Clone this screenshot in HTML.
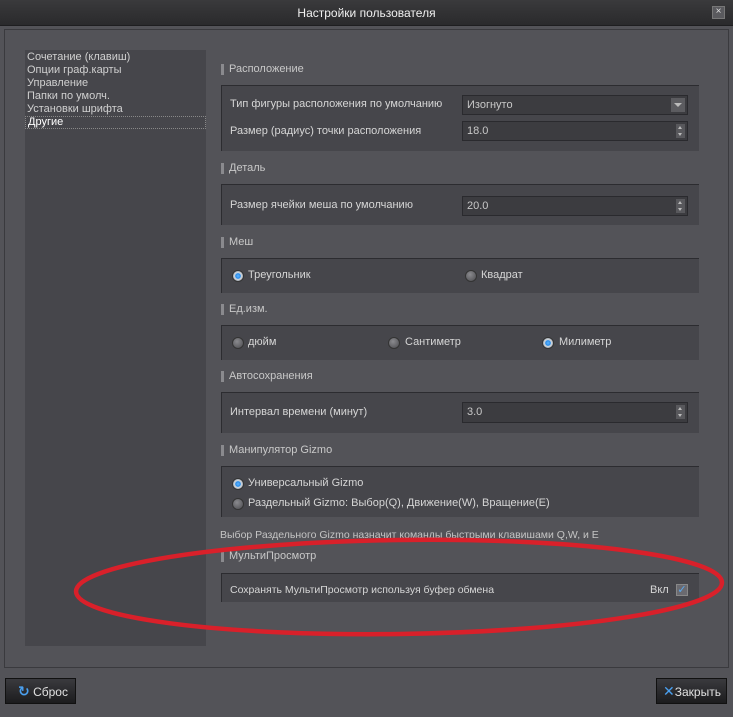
<!DOCTYPE html>
<html><head><meta charset="utf-8"><style>
body{margin:0;width:733px;height:717px;background:#535358;font-family:"Liberation Sans","DejaVu Sans",sans-serif;font-size:11px;color:#d8d8d8;position:relative;overflow:hidden}
.abs{position:absolute}
.title{left:0;top:0;width:733px;height:25px;background:linear-gradient(#3a3a3c,#2a2a2c);border-bottom:1px solid #1e1e20;text-align:center;line-height:27px;color:#f0f0f0;font-size:12px}
.frame{left:4px;top:29px;width:723px;height:637px;border:1px solid #3a3a3e}
.list{left:25px;top:50px;width:181px;height:596px;background:#46464b;padding-top:1px;box-sizing:border-box}
.list div{height:13px;line-height:13px;padding-left:2px;color:#d0d0d0}
.lbl{left:221px;color:#c8c8c8;height:14px;line-height:14px;padding-left:8px}
.lbl:before{content:"";position:absolute;left:0;top:2px;width:3px;height:11px;background:#8a8a8e}
.box{left:221px;width:477px;background:#46464b;border-top:1px solid #2c2c30;border-left:1px solid #2c2c30}
.inp{left:462px;width:226px;height:20px;background:#3c3c40;border:1px solid #2a2a2e;box-sizing:border-box;line-height:18px;padding-left:4px;color:#c8c8c8}
.spin{position:absolute;right:2px;top:2px;width:9px;height:14px;background:#58585c}
.spin:before{content:"";position:absolute;left:2px;top:2px;border:2.5px solid transparent;border-bottom:3px solid #bbb;border-top:0}
.spin:after{content:"";position:absolute;left:2px;bottom:2px;border:2.5px solid transparent;border-top:3px solid #bbb;border-bottom:0}
.t{color:#d6d6d6}
.rad{width:10px;height:10px;border-radius:50%;background:radial-gradient(circle at 40% 35%,#8a8a8e,#4a4a4e);border:1px solid #333}
.rad.on{background:radial-gradient(circle,#5fb6ff 0,#2a8ae8 35%,#cfd8e0 45%,#8a8a90 100%)}
.btn{top:678px;height:26px;border:1px solid #111;background:linear-gradient(#3a3a3e,#1c1c1e);box-sizing:border-box;color:#e0e0e0;font-size:12px;line-height:24px}
</style></head><body>
<div class="abs title">Настройки пользователя</div>
<div class="abs" style="left:712px;top:6px;width:11px;height:11px;background:#5a5a5e;border:1px solid #777;color:#ddd;font-size:10px;line-height:10px;text-align:center">×</div>
<div class="abs frame"></div>
<div class="abs list">
<div>Сочетание (клавиш)</div><div>Опции граф.карты</div><div>Управление</div><div>Папки по умолч.</div><div>Установки шрифта</div><div style="color:#fff;border:1px dotted #888;height:11px;line-height:11px">Другие</div>
</div>

<div class="abs lbl" style="top:62px">Расположение</div>
<div class="abs box" style="top:85px;height:65px"></div>
<div class="abs t" style="left:230px;top:98px">Тип фигуры расположения по умолчанию</div>
<div class="abs inp" style="top:95px">Изогнуто<div class="abs" style="right:2px;top:2px;width:14px;height:14px;background:#5c5c60"><div class="abs" style="left:3px;top:5px;border:4px solid transparent;border-top:4px solid #bbb;border-bottom:0"></div></div></div>
<div class="abs t" style="left:230px;top:125px">Размер (радиус) точки расположения</div>
<div class="abs inp" style="top:121px">18.0<div class="spin"></div></div>

<div class="abs lbl" style="top:161px">Деталь</div>
<div class="abs box" style="top:184px;height:40px"></div>
<div class="abs t" style="left:230px;top:199px">Размер ячейки меша по умолчанию</div>
<div class="abs inp" style="top:196px">20.0<div class="spin"></div></div>

<div class="abs lbl" style="top:235px">Меш</div>
<div class="abs box" style="top:258px;height:34px"></div>
<div class="abs rad on" style="left:232px;top:270px"></div><div class="abs t" style="left:248px;top:269px">Треугольник</div>
<div class="abs rad" style="left:465px;top:270px"></div><div class="abs t" style="left:481px;top:269px">Квадрат</div>

<div class="abs lbl" style="top:302px">Ед.изм.</div>
<div class="abs box" style="top:325px;height:34px"></div>
<div class="abs rad" style="left:232px;top:337px"></div><div class="abs t" style="left:248px;top:336px">дюйм</div>
<div class="abs rad" style="left:388px;top:337px"></div><div class="abs t" style="left:405px;top:336px">Сантиметр</div>
<div class="abs rad on" style="left:542px;top:337px"></div><div class="abs t" style="left:559px;top:336px">Милиметр</div>

<div class="abs lbl" style="top:369px">Автосохранения</div>
<div class="abs box" style="top:392px;height:40px"></div>
<div class="abs t" style="left:230px;top:406px">Интервал времени (минут)</div>
<div class="abs inp" style="top:402px;height:21px">3.0<div class="spin"></div></div>

<div class="abs lbl" style="top:443px">Манипулятор Gizmo</div>
<div class="abs box" style="top:466px;height:50px"></div>
<div class="abs rad on" style="left:232px;top:478px"></div><div class="abs t" style="left:248px;top:477px">Универсальный Gizmo</div>
<div class="abs rad" style="left:232px;top:498px"></div><div class="abs t" style="left:248px;top:497px">Раздельный Gizmo: Выбор(Q), Движение(W), Вращение(E)</div>

<div class="abs" style="left:220px;top:529px;color:#c4c4c4;font-size:10.5px">Выбор Раздельного Gizmo назначит команды быстрыми клавишами Q,W, и E</div>

<div class="abs lbl" style="top:549px">МультиПросмотр</div>
<div class="abs box" style="top:573px;height:28px"></div>
<div class="abs t" style="left:230px;top:584px;font-size:10.5px">Сохранять МультиПросмотр используя буфер обмена</div>
<div class="abs t" style="left:650px;top:584px">Вкл</div>
<div class="abs" style="left:676px;top:584px;width:10px;height:10px;background:#6a6a70;border:1px solid #888;color:#5aa8ee;font-size:11px;line-height:10px;text-align:center;font-weight:bold">✓</div>

<svg class="abs" style="left:0;top:0" width="733" height="717"><ellipse cx="399" cy="587" rx="323" ry="47" fill="none" stroke="#d9202a" stroke-width="4.5" transform="rotate(-0.8 399 587)"/></svg>

<div class="abs btn" style="left:5px;width:71px;padding-left:12px"><span style="color:#4aa0f0;font-weight:bold;font-size:14px">↻</span> Сброс</div>
<div class="abs btn" style="left:656px;width:71px;padding-left:6px"><span style="color:#4aa0f0;font-weight:bold;font-size:14px">✕</span>Закрыть</div>
</body></html>
